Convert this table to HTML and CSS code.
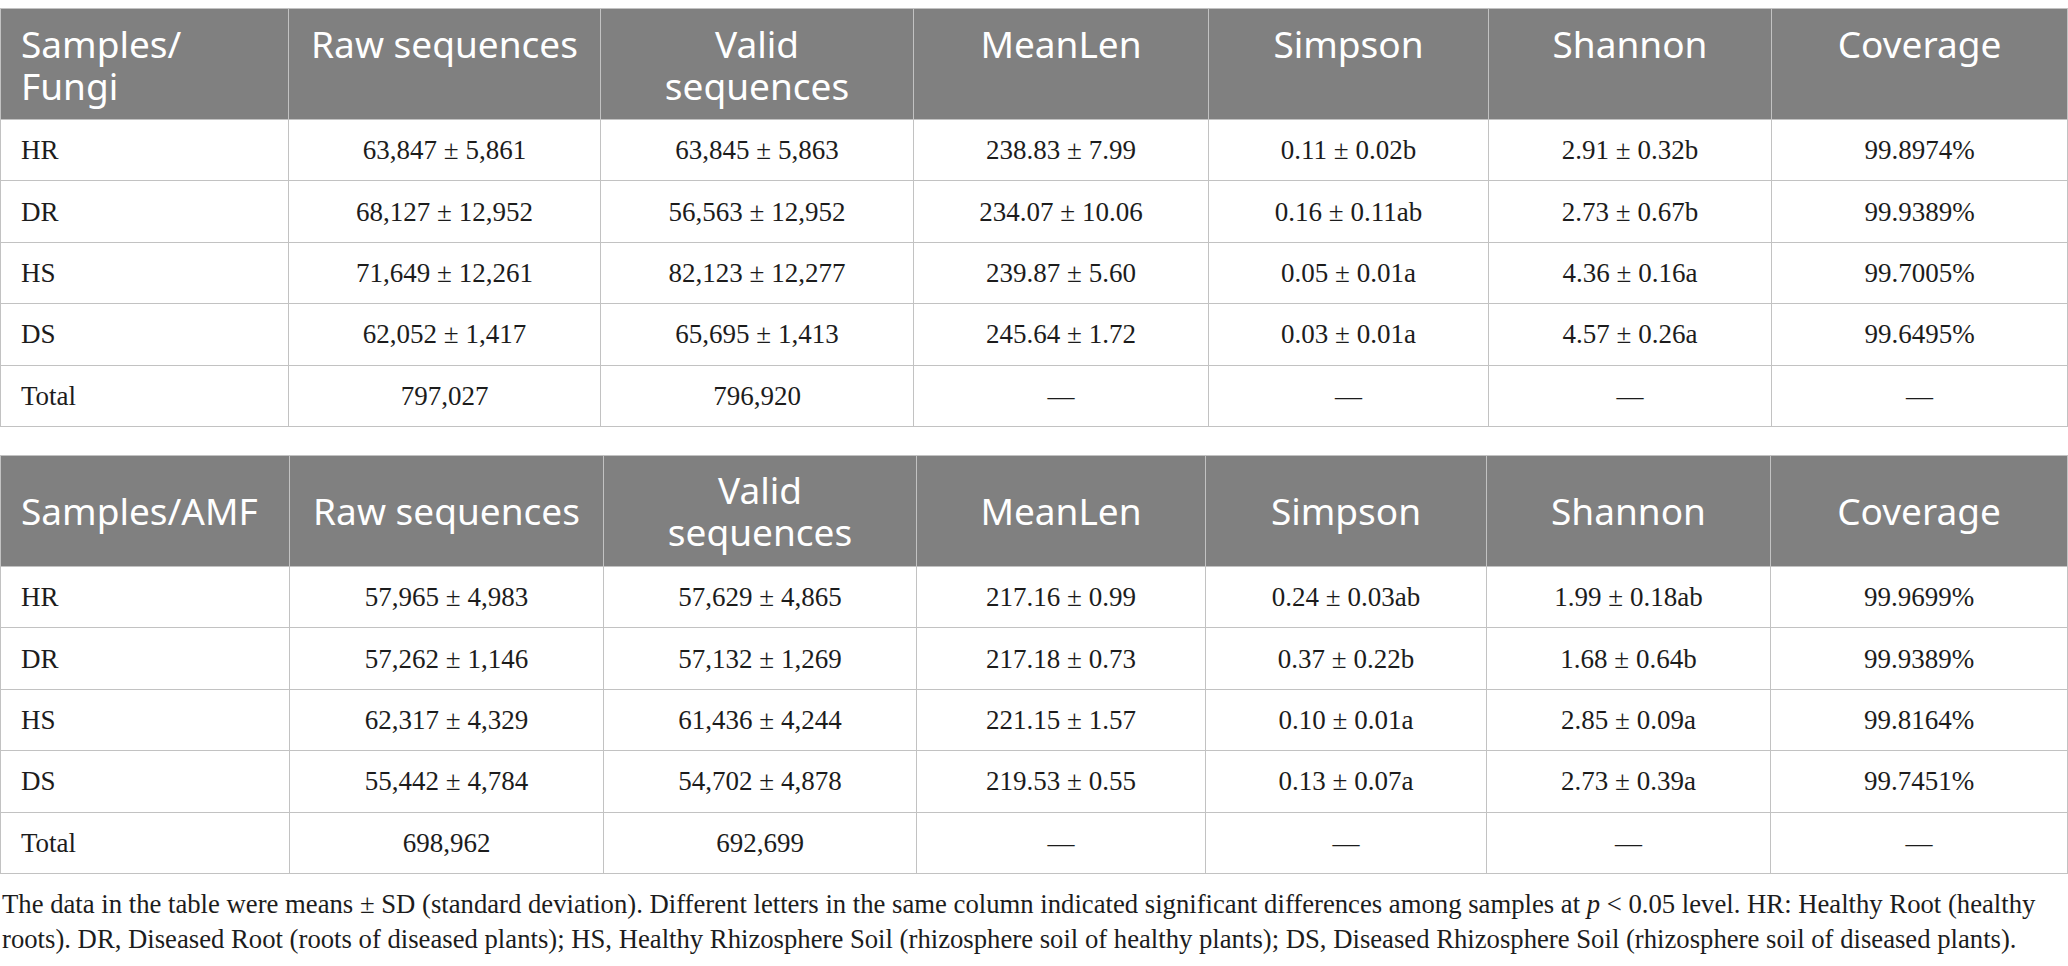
FILE: index.html
```html
<!DOCTYPE html>
<html>
<head>
<meta charset="utf-8">
<link rel="stylesheet" href="styles.css">
</head>
<body>
<div class="page">
  <table class="data t1">
    <colgroup>
      <col class="a1"><col class="a2"><col class="a3"><col class="a4"><col class="a5"><col class="a6"><col class="a7">
    </colgroup>
    <thead>
      <tr class="head top">
        <th class="first">Samples/<br>Fungi</th>
        <th>Raw sequences</th>
        <th>Valid<br>sequences</th>
        <th>MeanLen</th>
        <th>Simpson</th>
        <th>Shannon</th>
        <th>Coverage</th>
      </tr>
    </thead>
    <tbody>
      <tr><td class="first">HR</td><td>63,847 ± 5,861</td><td>63,845 ± 5,863</td><td>238.83 ± 7.99</td><td>0.11 ± 0.02b</td><td>2.91 ± 0.32b</td><td>99.8974%</td></tr>
      <tr><td class="first">DR</td><td>68,127 ± 12,952</td><td>56,563 ± 12,952</td><td>234.07 ± 10.06</td><td>0.16 ± 0.11ab</td><td>2.73 ± 0.67b</td><td>99.9389%</td></tr>
      <tr><td class="first">HS</td><td>71,649 ± 12,261</td><td>82,123 ± 12,277</td><td>239.87 ± 5.60</td><td>0.05 ± 0.01a</td><td>4.36 ± 0.16a</td><td>99.7005%</td></tr>
      <tr><td class="first">DS</td><td>62,052 ± 1,417</td><td>65,695 ± 1,413</td><td>245.64 ± 1.72</td><td>0.03 ± 0.01a</td><td>4.57 ± 0.26a</td><td>99.6495%</td></tr>
      <tr><td class="first">Total</td><td>797,027</td><td>796,920</td><td>—</td><td>—</td><td>—</td><td>—</td></tr>
    </tbody>
  </table>

  <table class="data t2">
    <colgroup>
      <col class="b1"><col class="b2"><col class="b3"><col class="b4"><col class="b5"><col class="b6"><col class="b7">
    </colgroup>
    <thead>
      <tr class="head mid">
        <th class="first">Samples/AMF</th>
        <th>Raw sequences</th>
        <th>Valid<br>sequences</th>
        <th>MeanLen</th>
        <th>Simpson</th>
        <th>Shannon</th>
        <th>Coverage</th>
      </tr>
    </thead>
    <tbody>
      <tr><td class="first">HR</td><td>57,965 ± 4,983</td><td>57,629 ± 4,865</td><td>217.16 ± 0.99</td><td>0.24 ± 0.03ab</td><td>1.99 ± 0.18ab</td><td>99.9699%</td></tr>
      <tr><td class="first">DR</td><td>57,262 ± 1,146</td><td>57,132 ± 1,269</td><td>217.18 ± 0.73</td><td>0.37 ± 0.22b</td><td>1.68 ± 0.64b</td><td>99.9389%</td></tr>
      <tr><td class="first">HS</td><td>62,317 ± 4,329</td><td>61,436 ± 4,244</td><td>221.15 ± 1.57</td><td>0.10 ± 0.01a</td><td>2.85 ± 0.09a</td><td>99.8164%</td></tr>
      <tr><td class="first">DS</td><td>55,442 ± 4,784</td><td>54,702 ± 4,878</td><td>219.53 ± 0.55</td><td>0.13 ± 0.07a</td><td>2.73 ± 0.39a</td><td>99.7451%</td></tr>
      <tr><td class="first">Total</td><td>698,962</td><td>692,699</td><td>—</td><td>—</td><td>—</td><td>—</td></tr>
    </tbody>
  </table>

  <p class="note">The data in the table were means ± SD (standard deviation). Different letters in the same column indicated significant differences among samples at <i>p</i> &lt; 0.05 level. HR: Healthy Root (healthy<br>roots). DR, Diseased Root (roots of diseased plants); HS, Healthy Rhizosphere Soil (rhizosphere soil of healthy plants); DS, Diseased Rhizosphere Soil (rhizosphere soil of diseased plants).</p>
</div>
</body>
</html>
```

FILE: styles.css
```css
html, body {
  margin: 0;
  padding: 0;
  background: #ffffff;
}

.page {
  padding-top: 8px;
  width: 2067px;
}

.data {
  width: 2067px;
  table-layout: fixed;
  border-collapse: collapse;
  font-family: "Liberation Serif", "Times New Roman", serif;
  font-size: 27px;
  color: #1c1c1c;
}

.t2 {
  margin-top: 28px;
}

.a1 { width: 288px; }
.a2 { width: 312px; }
.a3 { width: 313px; }
.a4 { width: 295px; }
.a5 { width: 280px; }
.a6 { width: 283px; }
.a7 { width: 296px; }

.b1 { width: 289px; }
.b2 { width: 314px; }
.b3 { width: 313px; }
.b4 { width: 289px; }
.b5 { width: 281px; }
.b6 { width: 284px; }
.b7 { width: 297px; }

.data th,
.data td {
  border: 1px solid #c2c2c2;
  padding: 0 10px;
  text-align: center;
}

.head th {
  background: #808080;
  color: #ffffff;
  font-family: "Noto Sans", "Open Sans", sans-serif;
  font-weight: 400;
  font-size: 37px;
  line-height: 42px;
  height: 111px;
  box-sizing: border-box;
}

.head.top th {
  vertical-align: top;
  padding-top: 14px;
}

.head.mid th {
  vertical-align: middle;
}

.data td {
  height: 60.4px;
  line-height: 30px;
  vertical-align: middle;
}

.data .first {
  text-align: left;
  padding-left: 20px;
}

.note {
  margin: 13px 0 0 2px;
  font-family: "Liberation Serif", "Times New Roman", serif;
  font-size: 26.7px;
  line-height: 35px;
  color: #1c1c1c;
  white-space: nowrap;
}
```
